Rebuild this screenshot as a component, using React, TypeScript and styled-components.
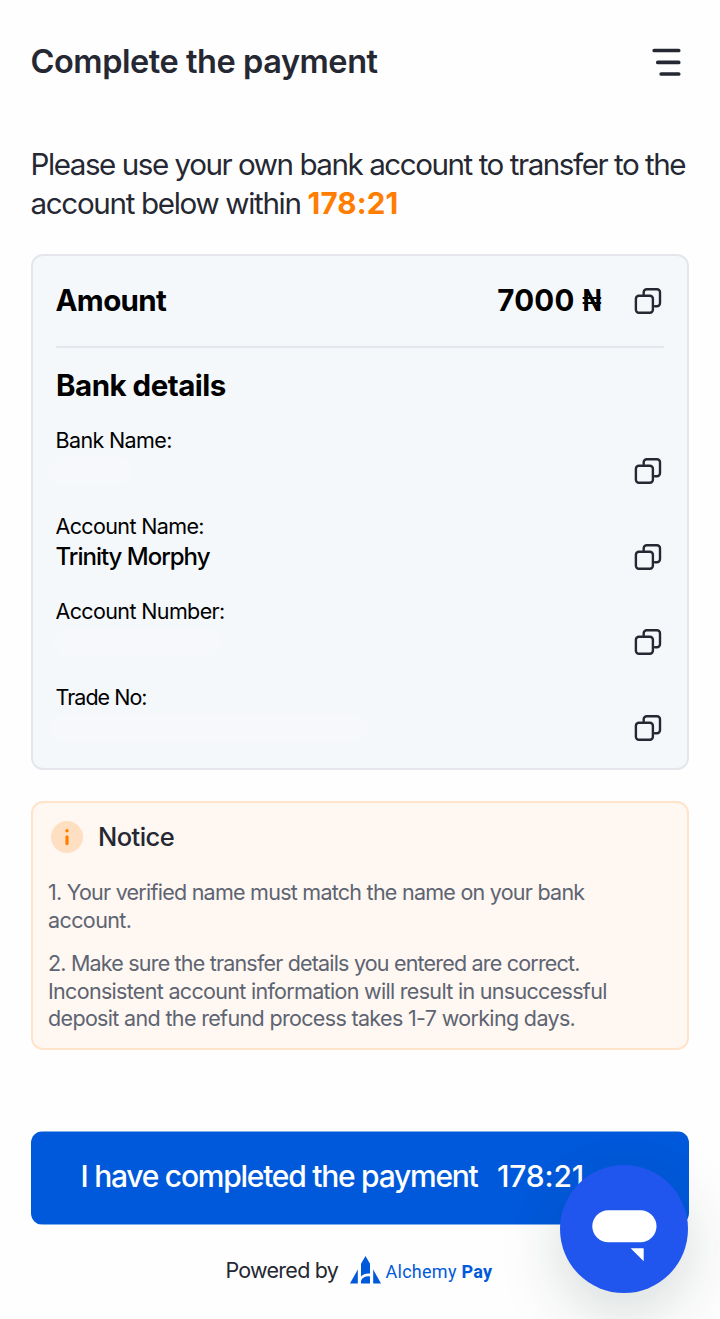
import React from "react";
import styled, { createGlobalStyle } from "styled-components";

const GlobalStyle = createGlobalStyle`
  * { box-sizing: border-box; }
  body {
    margin: 0;
    background: #fefefe;
    font-family: Inter, "Liberation Sans", sans-serif;
    color: #252832;
  }
  h1, h2, p { margin: 0; }
  button { font: inherit; border: 0; padding: 0; background: none; display: block; }
  svg { display: block; }
`;

const Page = styled.main`
  position: relative;
  width: 720px;
  height: 1319px;
  padding: 0 31px;
  overflow: hidden;
  display: flex;
  flex-direction: column;
`;

const Header = styled.header`
  display: flex;
  align-items: center;
  justify-content: space-between;
  height: 124px;
  padding-right: 7px;
`;

const Title = styled.h1`
  margin-left: -0.5px;
  padding-bottom: 2px;
  font-size: 32.5px;
  font-weight: 600;
  letter-spacing: -0.45px;
  white-space: nowrap;
`;

const Line = styled.span<{ $tracking: number }>`
  display: block;
  letter-spacing: ${(p) => p.$tracking}px;
`;

const Intro = styled.p`
  margin-top: 21px;
  margin-left: -0.5px;
  font-size: 29.6px;
  line-height: 39px;
  white-space: nowrap;
`;

const Countdown = styled.strong`
  color: #ff7d00;
  font-weight: 700;
  letter-spacing: 0.1px;
`;

const Card = styled.section`
  margin-top: 31px;
  height: 516px;
  padding: 0 23px;
  border: 2px solid #e5e6eb;
  border-radius: 12px;
  background: #f4f8fb;
  color: #000;
`;

const AmountRow = styled.div`
  display: flex;
  align-items: center;
  height: 92px;
  border-bottom: 2px solid #e5e6eb;
  padding-right: 2px;
`;

const CardHeading = styled.h2`
  font-size: 29.5px;
  line-height: 40px;
  font-weight: 700;
  letter-spacing: -0.5px;
  white-space: nowrap;
`;

const AmountLabel = styled(CardHeading)`
  flex: 1;
  margin-left: -0.5px;
  padding-bottom: 2px;
  letter-spacing: -0.65px;
`;

const AmountValue = styled(CardHeading)`
  margin-right: 33px;
  padding-bottom: 2px;
  letter-spacing: 0.2px;
`;

const Naira = styled.span`
  display: inline-block;
  margin-left: -3px;
  letter-spacing: 0;
  transform: scaleX(0.86);
  transform-origin: right;
`;

const DetailsHeading = styled(CardHeading)`
  margin-top: 17px;
`;

const DetailList = styled.div`
  margin-top: 21px;
  display: flex;
  flex-direction: column;
`;

const Detail = styled.div`
  height: 85.7px;
  display: grid;
  grid-template-columns: 1fr auto;
  grid-template-rows: 30px 30px;
  align-items: center;
  padding-right: 2px;
`;

const DetailLabel = styled.span<{ $tracking?: number }>`
  grid-column: 1 / -1;
  align-self: start;
  margin-left: -0.5px;
  font-size: 21.5px;
  line-height: 28px;
  letter-spacing: ${(p) => p.$tracking ?? -0.63}px;
`;

const DetailValue = styled.span`
  margin-left: -0.5px;
  font-size: 24px;
  line-height: 30px;
  font-weight: 500;
  letter-spacing: -1px;
`;

const Redaction = styled.span<{ $width: number; $shift: number }>`
  width: ${(p) => p.$width}px;
  margin-left: ${(p) => p.$shift}px;
  height: 28px;
  border-radius: 14px;
  background: #f6f8fb;
`;

const NoticeBox = styled.section`
  margin-top: 31px;
  height: 249px;
  padding: 18px 15px 0;
  border: 2px solid #ffe4c9;
  border-radius: 12px;
  background: #fff7f1;
`;

const NoticeHead = styled.div`
  display: flex;
  align-items: center;
  gap: 15px;
  padding-left: 3px;
  height: 32px;
  margin-bottom: 26px;
`;

const NoticeTitle = styled.h2`
  padding-bottom: 2px;
  font-size: 25.5px;
  font-weight: 500;
  letter-spacing: -0.55px;
`;

const NoticeText = styled.p`
  font-size: 21.5px;
  line-height: 27.6px;
  color: #5d6472;
  white-space: nowrap;
  & + & { margin-top: 16px; }
`;

const PayButton = styled.button`
  margin-top: 81px;
  width: 100%;
  height: 94px;
  padding: 0 0 4px 49.5px;
  display: flex;
  align-items: center;
  gap: 19.5px;
  border-radius: 12px;
  background: linear-gradient(#7facec 1px, #0059db 1px calc(100% - 1px), #7facec calc(100% - 1px));
  color: #fff;
  font-size: 30px;
  font-weight: 500;
  letter-spacing: -1.25px;
  white-space: nowrap;
`;

const Timer = styled.span`
  letter-spacing: -0.2px;
`;

const Footer = styled.footer`
  margin-top: 28px;
  padding-left: 194px;
  height: 34px;
  display: flex;
  align-items: center;
`;

const PoweredBy = styled.span`
  width: 125px;
  padding-left: 0.5px;
  font-size: 21.5px;
  letter-spacing: -0.75px;
  white-space: nowrap;
`;

const Brand = styled.span`
  margin: 3px 0 0 4.5px;
  font-family: Roboto, sans-serif;
  font-size: 18px;
  letter-spacing: 0.27px;
  color: #0059db;
  white-space: nowrap;
  b { font-weight: 700; }
`;

const ChatButton = styled.button`
  position: absolute;
  left: 560px;
  top: 1165px;
  width: 128px;
  height: 128px;
  border-radius: 50%;
  background: #2056ee;
  box-shadow: 0 20px 64px rgba(0, 40, 36, 0.17);
`;

const CopyIcon = () => (
  <svg width="28" height="28" viewBox="0 0 28 28" fill="none" stroke="#252832" strokeWidth="2.4">
    <rect x="1.9" y="8.8" width="17" height="17" rx="3" />
    <path d="M9.7 7.2V5.2a3 3 0 0 1 3-3H23a3 3 0 0 1 3 3v11a3 3 0 0 1-3 3h-2" strokeLinecap="round" />
  </svg>
);

const MenuIcon = () => (
  <svg width="30" height="30" viewBox="0 0 30 30" stroke="#252832" strokeWidth="3.7" strokeLinecap="round">
    <path d="M2.2 3.5H26.7M5.8 15.4H26.7M9.2 27H26.7" />
  </svg>
);

const InfoIcon = () => (
  <svg width="32" height="32" viewBox="0 0 32 32">
    <circle cx="16" cy="16" r="16" fill="#ffdfc1" />
    <g fill="#ff7d00">
      <circle cx="16" cy="9.7" r="1.7" />
      <rect x="14.4" y="14.2" width="3.2" height="10" rx="1.6" />
    </g>
  </svg>
);

const BrandMark = () => (
  <svg width="31" height="28" viewBox="0 0 31 28" fill="#0059db">
    <path d="M7.8 13.5V27.5H0Z" />
    <path d="M23.2 13.5V27.5H31Z" />
    <path d="M15.5 0L20 7.8V17.6C16.5 17 13 18.2 11 20.6V7.8Z" />
    <path d="M11 27.5V24.5C13 20.5 17 19.8 20 20.4V27.5Z" />
  </svg>
);

const ChatIcon = () => (
  <svg width="128" height="128" viewBox="0 0 128 128" fill="#fff">
    <rect x="32.3" y="45.2" width="64.2" height="32" rx="16" />
    <path d="M70.7 83.3H83.7V96.3Z" />
  </svg>
);

const CopyButton = () => (
  <button aria-label="Copy">
    <CopyIcon />
  </button>
);

const details = [
  { label: "Bank Name:", width: 84, shift: -8 },
  { label: "Account Name:", value: "Trinity Morphy" },
  { label: "Account Number:", width: 168, shift: -2 },
  { label: "Trade No:", width: 318, shift: -6, tracking: -0.98 },
];

export default function App() {
  return (
    <>
      <GlobalStyle />
      <Page>
        <Header>
          <Title>Complete the payment</Title>
          <button aria-label="Menu">
            <MenuIcon />
          </button>
        </Header>
        <Intro>
          <Line $tracking={-1.46}>Please use your own bank account to transfer to the</Line>
          <Line $tracking={-1.33}>
            account below within <Countdown>178:21</Countdown>
          </Line>
        </Intro>
        <Card>
          <AmountRow>
            <AmountLabel>Amount</AmountLabel>
            <AmountValue>
              7000 <Naira>₦</Naira>
            </AmountValue>
            <CopyButton />
          </AmountRow>
          <DetailsHeading>Bank details</DetailsHeading>
          <DetailList>
            {details.map((d) => (
              <Detail key={d.label}>
                <DetailLabel $tracking={d.tracking}>{d.label}</DetailLabel>
                {d.value ? (
                  <DetailValue>{d.value}</DetailValue>
                ) : (
                  <Redaction $width={d.width ?? 0} $shift={d.shift ?? 0} />
                )}
                <CopyButton />
              </Detail>
            ))}
          </DetailList>
        </Card>
        <NoticeBox>
          <NoticeHead>
            <InfoIcon />
            <NoticeTitle>Notice</NoticeTitle>
          </NoticeHead>
          <NoticeText>
            <Line $tracking={-0.75}>1. Your verified name must match the name on your bank</Line>
            <Line $tracking={-0.6}>account.</Line>
          </NoticeText>
          <NoticeText>
            <Line $tracking={-0.81}>2. Make sure the transfer details you entered are correct.</Line>
            <Line $tracking={-0.69}>Inconsistent account information will result in unsuccessful</Line>
            <Line $tracking={-0.66}>deposit and the refund process takes 1-7 working days.</Line>
          </NoticeText>
        </NoticeBox>
        <PayButton>
          <span>I have completed the payment</span>
          <Timer>178:21</Timer>
        </PayButton>
        <Footer>
          <PoweredBy>Powered by</PoweredBy>
          <BrandMark />
          <Brand>
            Alchemy <b>Pay</b>
          </Brand>
        </Footer>
        <ChatButton aria-label="Chat">
          <ChatIcon />
        </ChatButton>
      </Page>
    </>
  );
}
